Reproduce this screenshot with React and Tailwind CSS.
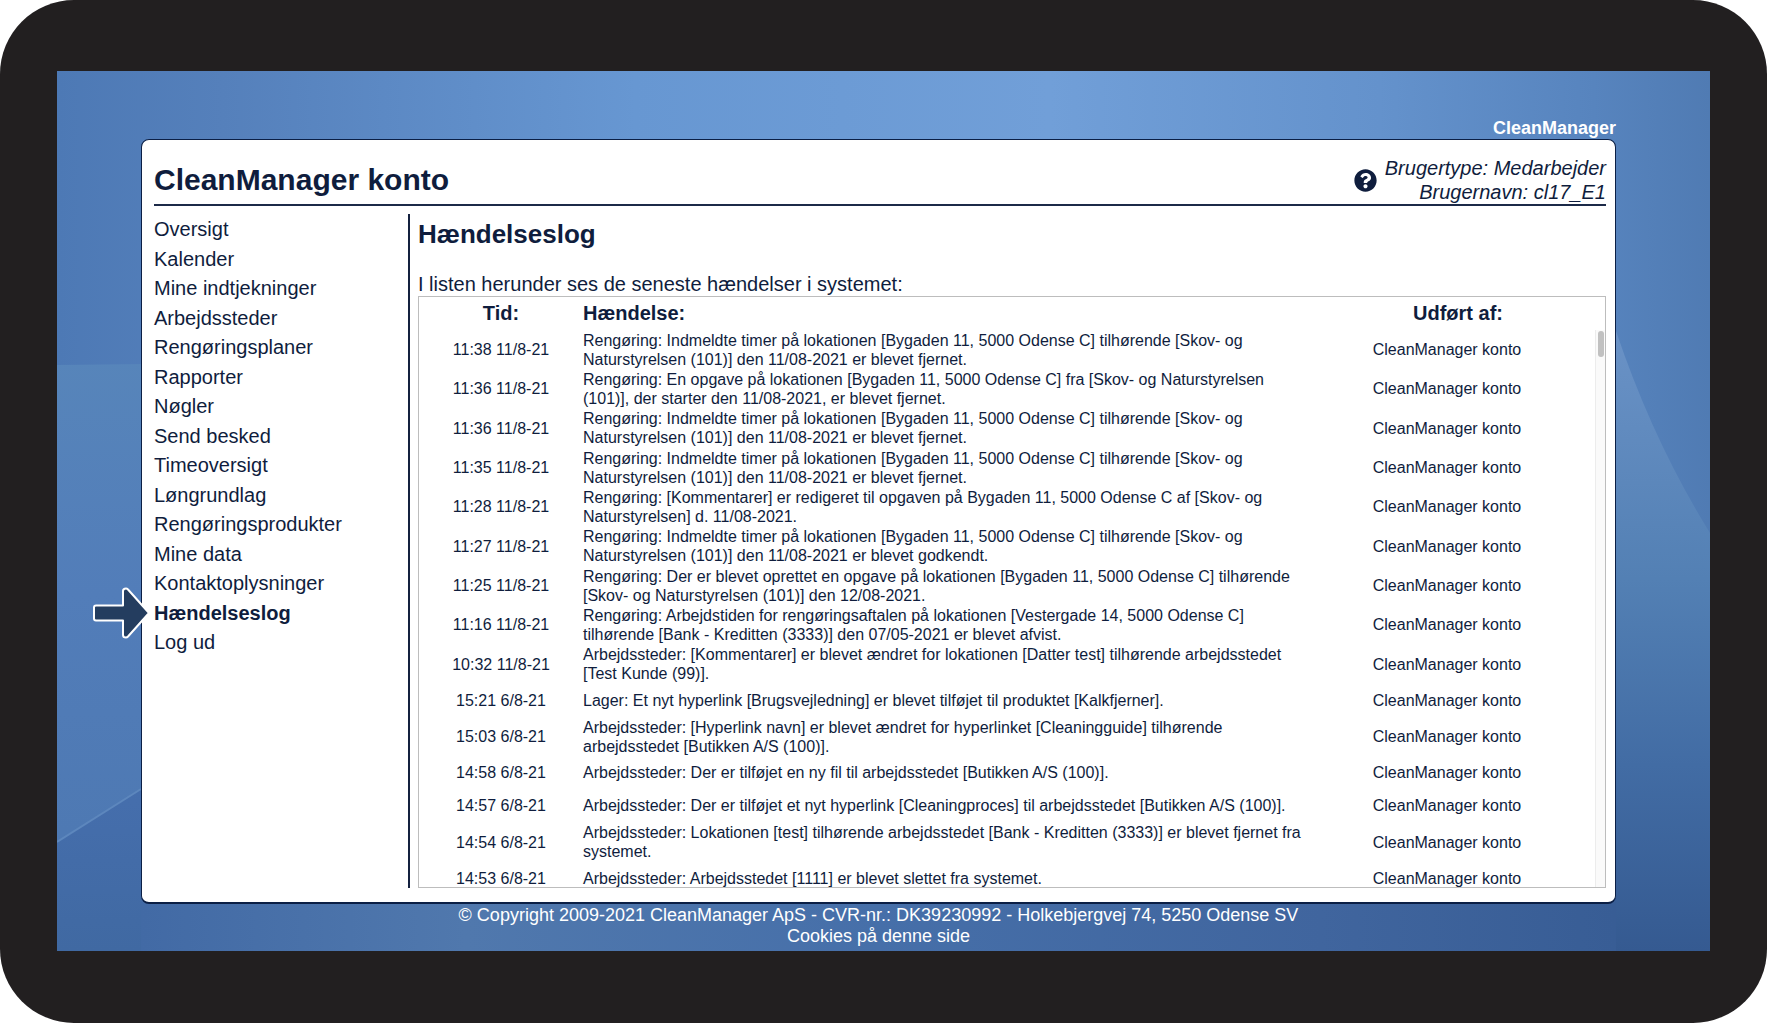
import { FaQuestionCircle } from 'react-icons/fa';

const menuItems = [
  'Oversigt',
  'Kalender',
  'Mine indtjekninger',
  'Arbejdssteder',
  'Rengøringsplaner',
  'Rapporter',
  'Nøgler',
  'Send besked',
  'Timeoversigt',
  'Løngrundlag',
  'Rengøringsprodukter',
  'Mine data',
  'Kontaktoplysninger',
  'Hændelseslog',
  'Log ud',
];

const user = 'CleanManager konto';

const events = [
  { time: '11:38 11/8-21', text: 'Rengøring: Indmeldte timer på lokationen [Bygaden 11, 5000 Odense C] tilhørende [Skov- og Naturstyrelsen (101)] den 11/08-2021 er blevet fjernet.' },
  { time: '11:36 11/8-21', text: 'Rengøring: En opgave på lokationen [Bygaden 11, 5000 Odense C] fra [Skov- og Naturstyrelsen (101)], der starter den 11/08-2021, er blevet fjernet.' },
  { time: '11:36 11/8-21', text: 'Rengøring: Indmeldte timer på lokationen [Bygaden 11, 5000 Odense C] tilhørende [Skov- og Naturstyrelsen (101)] den 11/08-2021 er blevet fjernet.' },
  { time: '11:35 11/8-21', text: 'Rengøring: Indmeldte timer på lokationen [Bygaden 11, 5000 Odense C] tilhørende [Skov- og Naturstyrelsen (101)] den 11/08-2021 er blevet fjernet.' },
  { time: '11:28 11/8-21', text: 'Rengøring: [Kommentarer] er redigeret til opgaven på Bygaden 11, 5000 Odense C af [Skov- og Naturstyrelsen] d. 11/08-2021.' },
  { time: '11:27 11/8-21', text: 'Rengøring: Indmeldte timer på lokationen [Bygaden 11, 5000 Odense C] tilhørende [Skov- og Naturstyrelsen (101)] den 11/08-2021 er blevet godkendt.' },
  { time: '11:25 11/8-21', text: 'Rengøring: Der er blevet oprettet en opgave på lokationen [Bygaden 11, 5000 Odense C] tilhørende [Skov- og Naturstyrelsen (101)] den 12/08-2021.' },
  { time: '11:16 11/8-21', text: 'Rengøring: Arbejdstiden for rengøringsaftalen på lokationen [Vestergade 14, 5000 Odense C] tilhørende [Bank - Kreditten (3333)] den 07/05-2021 er blevet afvist.' },
  { time: '10:32 11/8-21', text: 'Arbejdssteder: [Kommentarer] er blevet ændret for lokationen [Datter test] tilhørende arbejdsstedet [Test Kunde (99)].' },
  { time: '15:21 6/8-21', text: 'Lager: Et nyt hyperlink [Brugsvejledning] er blevet tilføjet til produktet [Kalkfjerner].' },
  { time: '15:03 6/8-21', text: 'Arbejdssteder: [Hyperlink navn] er blevet ændret for hyperlinket [Cleaningguide] tilhørende arbejdsstedet [Butikken A/S (100)].' },
  { time: '14:58 6/8-21', text: 'Arbejdssteder: Der er tilføjet en ny fil til arbejdsstedet [Butikken A/S (100)].' },
  { time: '14:57 6/8-21', text: 'Arbejdssteder: Der er tilføjet et nyt hyperlink [Cleaningproces] til arbejdsstedet [Butikken A/S (100)].' },
  { time: '14:54 6/8-21', text: 'Arbejdssteder: Lokationen [test] tilhørende arbejdsstedet [Bank - Kreditten (3333)] er blevet fjernet fra systemet.' },
  { time: '14:53 6/8-21', text: 'Arbejdssteder: Arbejdsstedet [1111] er blevet slettet fra systemet.' },
];

// Blue wallpaper with soft overlapping shapes
function Wallpaper() {
  return (
    <svg
      className="absolute inset-0 -z-10 h-full w-full"
      viewBox="0 0 1653 880"
      preserveAspectRatio="none"
      aria-hidden="true"
    >
      <defs>
        <linearGradient id="sky">
          <stop offset="0" stopColor="#4d79b5" />
          <stop offset="0.1" stopColor="#5580bb" />
          <stop offset="0.35" stopColor="#6797d2" />
          <stop offset="0.6" stopColor="#719fd8" />
          <stop offset="0.8" stopColor="#6492cc" />
          <stop offset="0.93" stopColor="#5784be" />
          <stop offset="1" stopColor="#507bb3" />
        </linearGradient>
        <linearGradient id="left" x1="0" y1="0" x2="0" y2="1">
          <stop offset="0" stopColor="#5785ba" />
          <stop offset="0.4" stopColor="#527db9" />
          <stop offset="1" stopColor="#4c77b0" />
        </linearGradient>
        <linearGradient id="leftLow" x1="0" y1="0" x2="0" y2="1">
          <stop offset="0.5" stopColor="#466fae" />
          <stop offset="1" stopColor="#4069a2" />
        </linearGradient>
        <linearGradient id="right" x1="0" y1="0" x2="0" y2="1">
          <stop offset="0" stopColor="#6a92c6" />
          <stop offset="0.4" stopColor="#5380b4" />
          <stop offset="0.7" stopColor="#426ca4" />
          <stop offset="1" stopColor="#355a91" />
        </linearGradient>
        <linearGradient id="floor">
          <stop offset="0" stopColor="#426aa5" />
          <stop offset="0.22" stopColor="#5078ad" />
          <stop offset="0.5" stopColor="#466fa9" />
          <stop offset="0.8" stopColor="#40659e" />
          <stop offset="1" stopColor="#385d95" />
        </linearGradient>
      </defs>
      <rect width="1653" height="880" fill="url(#sky)" />
      <path d="M0 294 L800 285 V880 H0 Z" fill="url(#left)" />
      <path d="M0 771 L84 718 L400 520 V880 H0 Z" fill="url(#leftLow)" />
      <path d="M0 771 L84 718" stroke="#5d87bd" strokeWidth="2" />
      <path d="M1559 260 Q1596 370 1653 462 V880 H800 V260 Z" fill="url(#right)" />
      <rect x="84" y="826" width="1475" height="54" fill="url(#floor)" />
    </svg>
  );
}

function Arrow() {
  return (
    <svg
      className="absolute -left-[62px] top-1/2 -translate-y-1/2"
      width="58"
      height="52"
      viewBox="0 0 58 52"
      aria-hidden="true"
    >
      <path
        d="M4 18.5 H31 V4 Q31 1.5 34 1.5 Q35 1.5 36 2.5 L57 26 L36 49.5 Q35 50.500 34 50.500 Q31 50.500 31 48 V33.5 H4 Q2 33.500 2 31.500 V20.500 Q2 18.500 4 18.500 Z"
        fill="#243d5f"
        stroke="#fff"
        strokeWidth="2"
        strokeLinejoin="round"
      />
    </svg>
  );
}

function Sidebar() {
  return (
    <nav className="w-[256px] shrink-0 border-r-2 border-[#14213f] pt-[3px]">
      <ul className="flex h-[437px] flex-col justify-between">
        {menuItems.map((item) => {
          const active = item === 'Hændelseslog';
          return (
            <li key={item} className="relative">
              {active && <Arrow />}
              <a href="#" className={active ? 'block leading-[24px] font-bold' : 'block leading-[24px]'}>
                {item}
              </a>
            </li>
          );
        })}
      </ul>
    </nav>
  );
}

function EventTable() {
  return (
    <div className="flex min-h-0 flex-1 overflow-hidden border border-[#bdbdbd]">
      <div className="min-w-0 flex-1">
        <table className="h-[598px] w-full table-fixed text-[16px] leading-[19px]">
          <thead>
            <tr className="h-[33px] text-[20px]">
              <th className="w-[164px]">Tid:</th>
              <th className="text-left">Hændelse:</th>
              <th className="w-[286px] pl-[12px]">Udført af:</th>
            </tr>
          </thead>
          <tbody>
            {events.map((event, index) => (
              <tr key={index} className="h-[32px]">
                <td className="text-center">{event.time}</td>
                <td>{event.text}</td>
                <td className="pr-[10px] text-center">{user}</td>
              </tr>
            ))}
          </tbody>
        </table>
      </div>
      {/* Scroll track */}
      <div className="mt-[33px] w-[10px] border-l border-[#ececec] bg-[#fafafa] pt-px">
        <div className="mx-auto h-[26px] w-[6px] rounded-full bg-[#c1c1c1]" />
      </div>
    </div>
  );
}

export default function App() {
  return (
    <div className="flex h-screen flex-col rounded-[74px] bg-[#221f20] px-[57px] pt-[71px] pb-[72px] font-['Liberation_Sans',Arial,sans-serif] text-[20px] text-[#0f1d3d]">
      <div className="relative isolate flex min-h-0 flex-1 flex-col pr-[94px] pl-[84px]">
        <Wallpaper />
        <p className="flex h-[68px] items-end justify-end text-[18px] leading-[22px] font-bold text-white">CleanManager</p>

        {/* Card */}
        <div className="flex min-h-0 flex-1 flex-col rounded-[8px] border border-b-2 border-[#0b1f45] bg-white pr-[9px] pb-[14px] pl-[12px]">
          <header className="flex h-[66px] shrink-0 items-end justify-between border-b-2 border-[#1c2a48]">
            <h1 className="pb-[8px] text-[30px] leading-[32px] font-bold">CleanManager konto</h1>
            <div className="flex items-center gap-[8px]">
              <button type="button" aria-label="Hjælp">
                <FaQuestionCircle className="size-[23px]" />
              </button>
              <p className="text-right leading-[24px] italic">
                Brugertype: Medarbejder
                <br />
                Brugernavn: cl17_E1
              </p>
            </div>
          </header>

          <div className="flex min-h-0 flex-1 pt-[8px]">
            <Sidebar />
            <main className="flex min-w-0 flex-1 flex-col pl-[8px]">
              <h2 className="pt-[4px] text-[26px] leading-[32px] font-bold">Hændelseslog</h2>
              <p className="pt-[22px] leading-[24px]">I listen herunder ses de seneste hændelser i systemet:</p>
              <EventTable />
            </main>
          </div>
        </div>

        <footer className="h-[47px] shrink-0 pt-px text-center text-[18px] leading-[21px] text-white">
          <p>© Copyright 2009-2021 CleanManager ApS - CVR-nr.: DK39230992 - Holkebjergvej 74, 5250 Odense SV</p>
          <a href="#">Cookies på denne side</a>
        </footer>
      </div>
    </div>
  );
}
